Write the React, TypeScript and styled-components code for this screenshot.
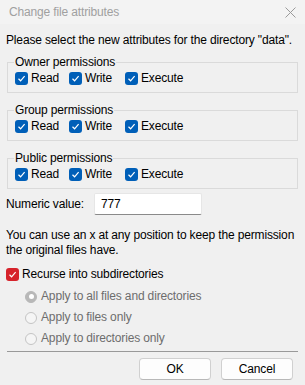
import React from "react";
import styled, { createGlobalStyle } from "styled-components";

const GlobalStyle = createGlobalStyle`
  html, body {
    margin: 0;
    padding: 0;
    background: #f0f0f0;
  }
  body {
    font-family: "Liberation Sans", Arial, sans-serif;
    font-size: 12px;
    letter-spacing: -0.15px;
    line-height: 15px;
    color: #000;
  }
`;

const Window = styled.div`
  width: 305px;
  height: 385px;
  background: #f0f0f0;
  display: flex;
  flex-direction: column;
  overflow: hidden;
  white-space: nowrap;
`;

const TitleBar = styled.div`
  height: 24px;
  background: #f3f3f3;
  display: flex;
  align-items: center;
  justify-content: space-between;
  padding: 0 9px;
  color: #a0a0a0;
`;

const Body = styled.div`
  display: flex;
  flex-direction: column;
  padding: 9px 6px 0 6px;
`;

const Text = styled.div`
  line-height: 15px;
`;

const Group = styled.fieldset`
  margin: 7px 1px 0 1px;
  padding: 1px 6px 6px 6px;
  border: 1px solid #dadada;
  & + & {
    margin-top: 10px;
  }
`;

const Legend = styled.legend`
  padding: 0 1px;
  line-height: 15px;
`;

const Row = styled.div`
  display: flex;
  align-items: center;
  height: 15px;
  padding-left: 1px;
`;

const CheckItem = styled.label<{ $width?: number }>`
  display: flex;
  align-items: center;
  gap: 3px;
  width: ${(p) => (p.$width ? `${p.$width}px` : "auto")};
`;

const Box = styled.span<{ $color: string }>`
  width: 13px;
  height: 13px;
  border-radius: 3px;
  background: ${(p) => p.$color};
  display: flex;
  align-items: center;
  justify-content: center;
  flex: none;
`;

const NumericRow = styled.div`
  display: flex;
  align-items: center;
  margin-top: 4px;
`;

const NumLabel = styled.span`
  width: 88px;
`;

const Input = styled.div`
  width: 100px;
  height: 20px;
  background: #fff;
  border: 1px solid #e6e6e6;
  border-bottom-color: #8a8a8a;
  border-radius: 2px;
  padding-left: 6px;
  display: flex;
  align-items: center;
`;

const Hint = styled.div`
  margin-top: 13px;
  line-height: 15px;
`;

const RecurseRow = styled.div`
  display: flex;
  align-items: center;
  gap: 3px;
  margin-top: 9px;
`;

const RadioList = styled.div`
  display: flex;
  flex-direction: column;
  gap: 6px;
  margin-top: 7px;
  padding-left: 19px;
`;

const RadioItem = styled.label`
  display: flex;
  align-items: center;
  gap: 4px;
  height: 15px;
  color: #6d6d6d;
`;

const Radio = styled.span<{ $on?: boolean }>`
  width: 12px;
  height: 12px;
  border-radius: 50%;
  box-sizing: border-box;
  border: 1px solid ${(p) => (p.$on ? "#b8b8b8" : "#c4c4c4")};
  background: ${(p) => (p.$on ? "#b8b8b8" : "#f5f5f5")};
  display: flex;
  align-items: center;
  justify-content: center;
  flex: none;
  &::after {
    content: "";
    display: ${(p) => (p.$on ? "block" : "none")};
    width: 5px;
    height: 5px;
    border-radius: 50%;
    background: #fff;
  }
`;

const Separator = styled.div`
  height: 1px;
  background: #999;
  margin: 5px 1px 0 1px;
`;

const Buttons = styled.div`
  display: flex;
  justify-content: flex-end;
  gap: 10px;
  margin-top: 6px;
  padding-right: 6px;
`;

const Button = styled.button`
  width: 72px;
  height: 22px;
  background: #fdfdfd;
  border: 1px solid #d0d0d0;
  border-bottom-color: #b8b8b8;
  border-radius: 4px;
  font-family: inherit;
  font-size: 12px;
  letter-spacing: inherit;
  color: #000;
  padding: 0;
`;

const Check = ({ color = "#005fb8" }: { color?: string }) => (
  <Box $color={color}>
    <svg width="9" height="9" viewBox="0 0 9 9">
      <path d="M1.5 4.8 L3.6 6.8 L7.6 2.2" fill="none" stroke="#fff" strokeWidth="1.2" />
    </svg>
  </Box>
);

const Close = () => (
  <svg width="11" height="11" viewBox="0 0 11 11">
    <path d="M0.5 0.5 L10.5 10.5 M10.5 0.5 L0.5 10.5" stroke="#9a9a9a" strokeWidth="1" />
  </svg>
);

const PermGroup = ({ title }: { title: string }) => (
  <Group>
    <Legend>{title}</Legend>
    <Row>
      <CheckItem $width={54}>
        <Check />
        Read
      </CheckItem>
      <CheckItem $width={56}>
        <Check />
        Write
      </CheckItem>
      <CheckItem>
        <Check />
        Execute
      </CheckItem>
    </Row>
  </Group>
);

export default function App() {
  return (
    <>
      <GlobalStyle />
      <Window>
        <TitleBar>
          <span>Change file attributes</span>
          <Close />
        </TitleBar>
        <Body>
          <Text>Please select the new attributes for the directory "data".</Text>
          <PermGroup title="Owner permissions" />
          <PermGroup title="Group permissions" />
          <PermGroup title="Public permissions" />
          <NumericRow>
            <NumLabel>Numeric value:</NumLabel>
            <Input>777</Input>
          </NumericRow>
          <Hint>
            You can use an x at any position to keep the permission
            <br />
            the original files have.
          </Hint>
          <RecurseRow>
            <Check color="#d6232b" />
            Recurse into subdirectories
          </RecurseRow>
          <RadioList>
            <RadioItem>
              <Radio $on />
              Apply to all files and directories
            </RadioItem>
            <RadioItem>
              <Radio />
              Apply to files only
            </RadioItem>
            <RadioItem>
              <Radio />
              Apply to directories only
            </RadioItem>
          </RadioList>
          <Separator />
          <Buttons>
            <Button>OK</Button>
            <Button>Cancel</Button>
          </Buttons>
        </Body>
      </Window>
    </>
  );
}
